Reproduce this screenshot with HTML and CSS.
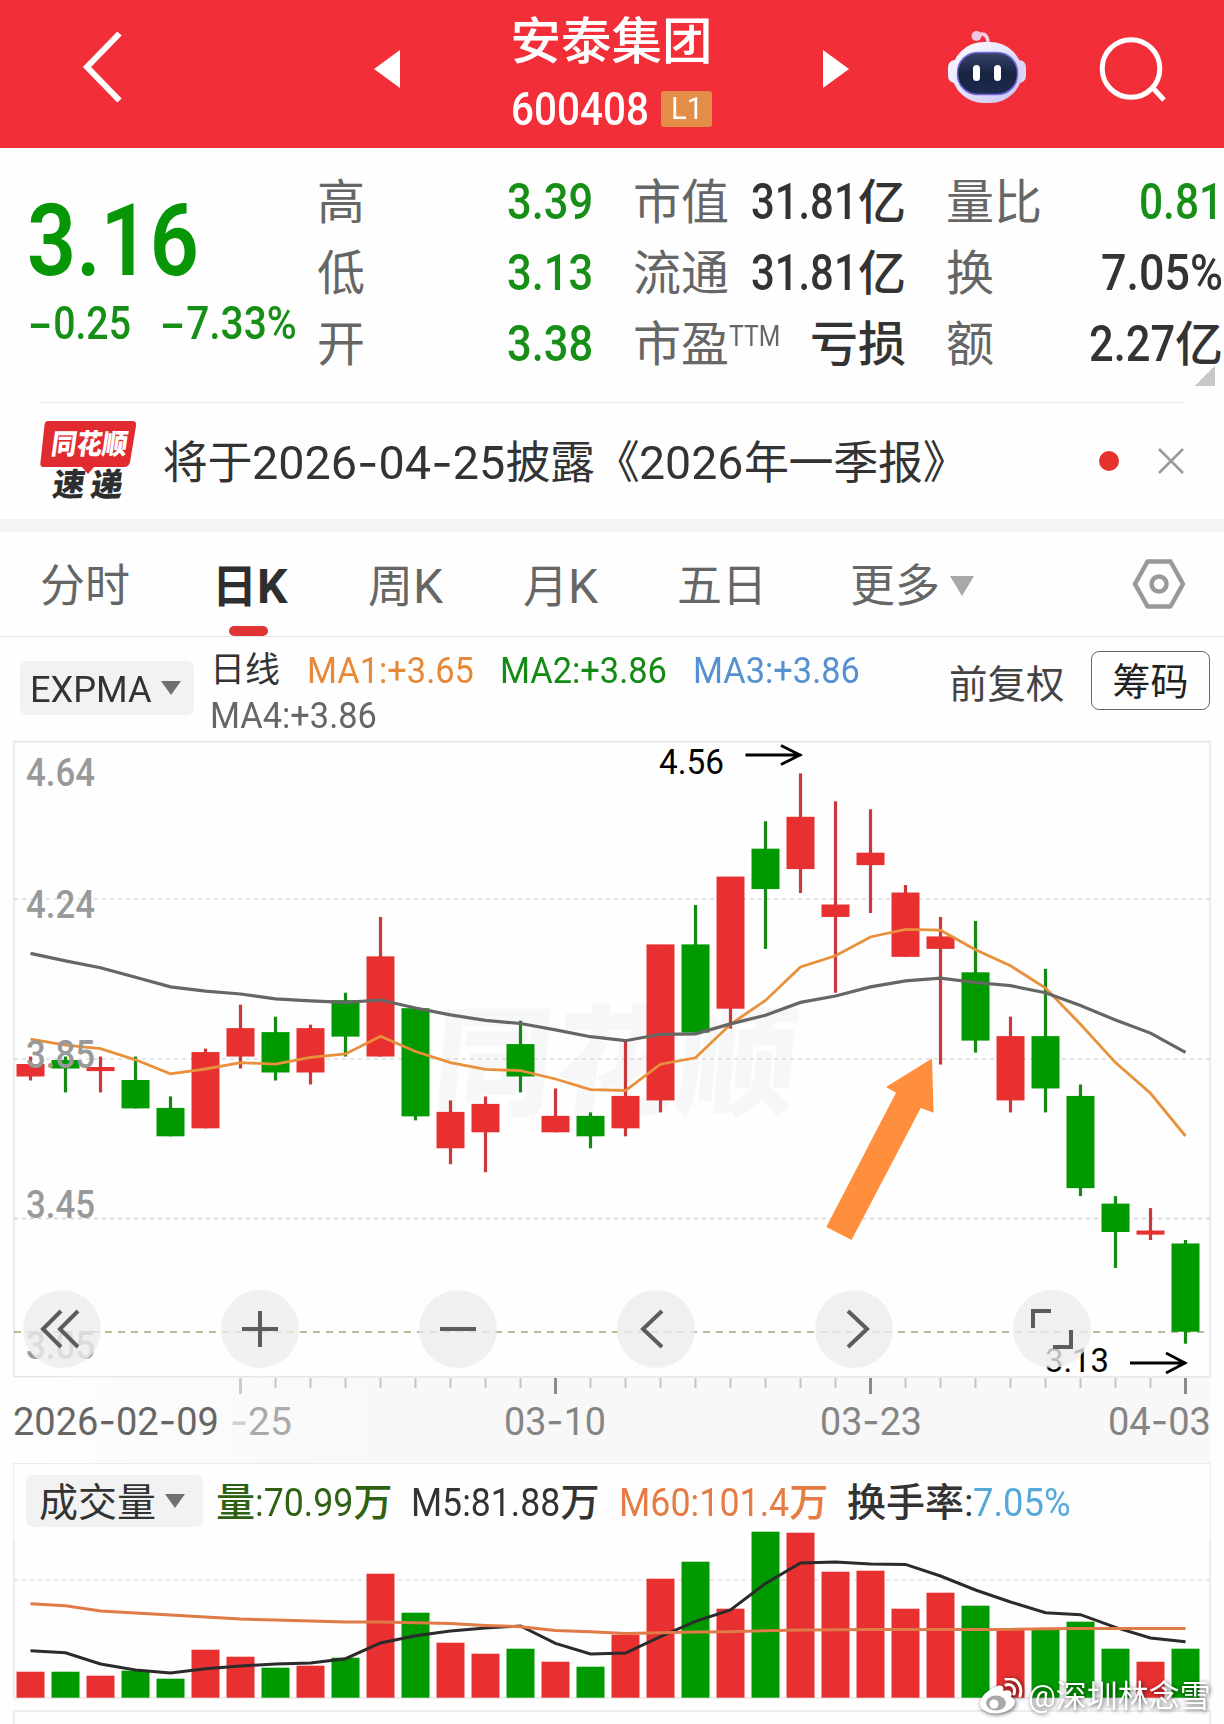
FILE: index.html
```html
<!DOCTYPE html>
<html lang="zh-CN">
<head>
<meta charset="utf-8">
<title>安泰集团 600408</title>
<link rel="stylesheet" href="styles.css">
</head>
<body>
<header class="topbar">
  <svg class="back" width="50" height="80" viewBox="0 0 50 80"><path d="M38.500 6.500L6 40L38.500 73.500" fill="none" stroke="#fff" stroke-width="6"/></svg>
  <svg class="prev" width="26" height="38" viewBox="0 0 26 38"><path d="M26 0V38L0 19z" fill="#fff"/></svg>
  <div class="heading">
    <h1>安泰集团</h1>
    <div class="code"><span class="fit num" data-w="138">600408</span><span class="level"><span class="fit" data-w="32">L1</span></span></div>
  </div>
  <svg class="next" width="26" height="38" viewBox="0 0 26 38"><path d="M0 0V38L26 19z" fill="#fff"/></svg>
  <svg class="robot" width="80" height="76" viewBox="0 0 80 76">
    <defs>
      <linearGradient id="shell" x1="0" y1="0" x2="1" y2="1"><stop offset="0" stop-color="#fff"/><stop offset=".5" stop-color="#e4e2fb"/><stop offset="1" stop-color="#c9bdf2"/></linearGradient>
      <linearGradient id="visor" x1="0" y1="0" x2="0" y2="1"><stop offset="0" stop-color="#37456a"/><stop offset=".5" stop-color="#18233f"/><stop offset="1" stop-color="#1d2b50"/></linearGradient>
    </defs>
    <path d="M29 8C37 3 41 8 41 15" fill="none" stroke="#f4cfe2" stroke-width="3.500"/>
    <circle cx="29.500" cy="8" r="5" fill="#f3c6df"/>
    <rect x="1" y="32" width="14" height="23" rx="7" fill="#eef0ff"/>
    <rect x="65" y="32" width="14" height="23" rx="7" fill="#dcd5f8"/>
    <rect x="5" y="14" width="70" height="61" rx="32" fill="url(#shell)"/>
    <rect x="10.500" y="24.500" width="60" height="42" rx="20" fill="url(#visor)" stroke="#7468e0" stroke-width="1.500"/>
    <rect x="26" y="37" width="7" height="16" rx="3.500" fill="#fff"/>
    <rect x="47" y="37" width="7" height="16" rx="3.500" fill="#fff"/>
  </svg>
  <svg class="search" width="68" height="68" viewBox="0 0 68 68"><g fill="none" stroke="#fff" stroke-width="5"><circle cx="32" cy="32.500" r="28.800"/><path d="M53 51L65 64"/></g></svg>
</header>

<section class="quote">
  <div class="price">
    <div class="last"><span class="fit num" data-w="172">3.16</span></div>
    <div class="change"><span class="fit" data-w="104"><i class="dash">−</i>0.25</span><span class="fit" data-w="138"><i class="dash">−</i>7.33%</span></div>
  </div>
  <dl class="stats">
    <div class="down"><dt>高</dt><dd><span class="fit" data-w="86">3.39</span></dd></div>
    <div><dt>市值</dt><dd><span class="fit" data-w="107">31.81</span>亿</dd></div>
    <div class="down"><dt>量比</dt><dd><span class="fit" data-w="84">0.81</span></dd></div>
    <div class="down"><dt>低</dt><dd><span class="fit" data-w="86">3.13</span></dd></div>
    <div><dt>流通</dt><dd><span class="fit" data-w="107">31.81</span>亿</dd></div>
    <div><dt>换</dt><dd><span class="fit" data-w="122">7.05%</span></dd></div>
    <div class="down"><dt>开</dt><dd><span class="fit" data-w="86">3.38</span></dd></div>
    <div><dt>市盈<sup class="fit" data-w="51">TTM</sup></dt><dd>亏损</dd></div>
    <div><dt>额</dt><dd><span class="fit" data-w="86">2.27</span>亿</dd></div>
  </dl>
  <i class="corner"></i>
</section>

<section class="news">
  <div class="brand">
    <svg width="98" height="80" viewBox="0 0 98 80">
      <path d="M8 0H92Q97 0 96 5L90 41Q89 46 84 46H54L48 53L42 46H4Q-.5 46 .5 41L4.500 4Q5 0 8 0z" fill="#e12b31"/>
      <g transform="skewX(-8)" font-family="Noto Sans CJK SC" font-weight="900">
        <text x="15" y="33" font-size="28" fill="#fff" textLength="76" lengthAdjust="spacingAndGlyphs">同花顺</text>
        <text x="22" y="75" font-size="32" fill="#2e2e2e" textLength="70" lengthAdjust="spacing">速递</text>
      </g>
    </svg>
  </div>
  <p>将于<span class="fit" data-w="253">2026<i class="dash">-</i>04<i class="dash">-</i>25</span>披露<span class="open">《</span><span class="fit" data-w="104">2026</span>年一季报》</p>
  <i class="dot"></i>
  <svg class="close" width="26" height="26" viewBox="0 0 26 26"><path d="M1 1L25 25M25 1L1 25" stroke="#999" stroke-width="2.500"/></svg>
</section>

<nav class="tabs">
  <a>分时</a><a class="on">日<b>K</b></a><a>周<b>K</b></a><a>月<b>K</b></a><a>五日</a><a class="more">更多<i></i></a>
  <svg width="54" height="52" viewBox="0 0 54 52"><g fill="none" stroke="#999" stroke-width="4.500" stroke-linejoin="round"><path d="M15.500 3.500H38.500L51 26L38.500 48.500H15.500L3 26z"/><circle cx="27" cy="26" r="7.500"/></g></svg>
</nav>

<section class="legend">
  <button class="pick"><span class="fit" data-w="122">EXPMA</span><i></i></button>
  <div class="mas">
    <span class="kind">日线</span><span class="fit ma1" data-w="167">MA1:+3.65</span><span class="fit ma2" data-w="167">MA2:+3.86</span><span class="fit ma3" data-w="167">MA3:+3.86</span><span class="fit ma4" data-w="167">MA4:+3.86</span>
  </div>
  <span class="adjust">前复权</span>
  <span class="chips">筹码</span>
</section>

<section class="chart">
  <svg id="price" width="1224" height="733" viewBox="0 730 1224 733"></svg>
  <div class="tools">
    <i><svg viewBox="-39 -39 78 78"><path d="M-1 -18L-19 0L-1 18M16 -18L-2 0L16 18"/></svg></i>
    <i><svg viewBox="-39 -39 78 78"><path d="M-18 0H18M0 -18V18" stroke-width="4"/></svg></i>
    <i><svg viewBox="-39 -39 78 78"><path d="M-18 0H18" stroke-width="4"/></svg></i>
    <i><svg viewBox="-39 -39 78 78"><path d="M6 -18L-13 0L6 18"/></svg></i>
    <i><svg viewBox="-39 -39 78 78"><path d="M-6 -18L13 0L-6 18"/></svg></i>
    <i><svg viewBox="-39 -39 78 78"><path d="M-19 -1V-18H-1M19 1V18H1" stroke-width="4"/></svg></i>
  </div>
</section>

<section class="volume">
  <div class="vlegend">
    <button class="pick vol">成交量<i></i></button>
    <span class="v1">量<span class="fit" data-w="98">:70.99</span>万</span>
    <span class="v2"><span class="fit" data-w="149">M5:81.88</span>万</span>
    <span class="v3"><span class="fit" data-w="170">M60:101.4</span>万</span>
    <span class="v4">换手率:<span class="fit pct" data-w="98">7.05%</span></span>
  </div>
  <svg id="vol" width="1224" height="184" viewBox="0 1540 1224 184"></svg>
  <div class="credit">
    <svg width="44" height="38" viewBox="0 0 44 38"><path d="M17 9C21 6 26 8 24 13C31 11 34 14 32 19C38 22 37 28 30 32C20 38 3 36 1 27C0 20 9 11 17 9z" fill="#fff"/><ellipse cx="17" cy="25" rx="10" ry="7.500" fill="#a9a9a9"/><circle cx="15" cy="26" r="4.500" fill="#fff"/><path d="M27 7C33 5 37 10 35 16M27 1C38 -1 44 8 41 18" fill="none" stroke="#fff" stroke-width="3" stroke-linecap="round"/></svg>
    <span>@深圳林念雪</span>
  </div>
</section>
<script src="chart.js"></script>
</body>
</html>
```
FILE: styles.css
```css
* { box-sizing: border-box; margin: 0; padding: 0; }
html, body { width: 1224px; height: 1724px; overflow: hidden; }
body { background: #fefefe; color: #333; font-family: Roboto, "Noto Sans CJK SC", sans-serif; }
i, sup { font-style: normal; }
svg { display: block; flex: none; }
button { border: 0; font: inherit; color: inherit; }

.fit { display: inline-block; white-space: nowrap; }
.fit > .in { display: inline-block; transform-origin: 0 50%; }
.dash { font-family: Inter, sans-serif; }

.topbar { height: 148px; background: #f22f38; display: flex; align-items: flex-start; color: #fff; }
.back { margin: 27px 244px 0 81px; }
.prev, .next { margin-top: 50px; }
.prev { margin-left: -1px; }
.heading { width: 423px; text-align: center; }
.heading h1 { font-size: 50.500px; line-height: 60px; font-weight: 500; margin-top: 12px; }
.code { display: flex; justify-content: center; align-items: center; font-size: 46px; font-weight: 500; line-height: 50px; margin-top: 12px; }
.level { margin-left: 13px; background: #e38e48; border-radius: 3px; width: 51px; height: 36px; font-size: 31px; line-height: 36px; font-weight: 400; }
.robot { margin: 28px 0 0 98px; }
.search { margin: 36px 0 0 72px; }

.quote { height: 254px; position: relative; display: flex; }
.price { width: 317px; padding-left: 27px; color: #069606; }
.last { font-size: 100px; font-weight: 600; line-height: 100px; margin-top: 43px; }
.change { font-size: 46px; font-weight: 500; line-height: 50px; display: flex; gap: 28px; margin-top: 6px; color: #178f17; }
.stats { width: 907px; display: grid; grid-template-columns: 276px 273px 277px; grid-auto-rows: 71px; column-gap: 40px; padding-top: 19px; font-size: 48px; line-height: 71px; }
.stats div { display: flex; justify-content: space-between; white-space: nowrap; }
.stats dt { color: #666; }
.stats dd { font-weight: 500; font-size: 48px; }
.stats dd .fit { font-size: 50px; }
.stats sup { font-size: 30px; line-height: 30px; vertical-align: 15px; }
.stats .down dd { color: #178f17; }
.corner { position: absolute; left: 1195px; top: 218px; width: 20px; height: 20px; background: linear-gradient(to bottom right, transparent 50%, #c8c8c8 50%); }

.news { height: 117px; margin: 0 40px; border-top: 1.500px solid #ececec; display: flex; align-items: center; }
.brand { width: 123px; }
.news p { font-size: 45px; line-height: 60px; letter-spacing: -.3px; width: 898px; white-space: nowrap; padding-top: 3px; }
.news p .fit { font-size: 46px; letter-spacing: 0; }
.news .dot { width: 20px; height: 20px; border-radius: 50%; background: #e5322f; margin-left: 40px; }
.news .close { margin-left: 39px; }

.tabs { height: 118px; border-top: 13px solid #f4f4f4; border-bottom: 1.500px solid #e4e4e4; display: grid; grid-template-columns: 172px 156px 155px 154px 173px 282px 60px; padding-left: 40px; align-items: center; font-size: 45px; line-height: 60px; color: #666; }
.tabs a { position: relative; white-space: nowrap; top: 3px; }
.tabs a b { font-weight: inherit; font-size: 48px; font-family: Roboto; }
.tabs .on { color: #2e2e2e; font-weight: 700; }
.tabs .on::after { content: ""; position: absolute; left: 17px; top: 69px; width: 39px; height: 10px; border-radius: 5px; background: #e03333; }
.more { display: flex; align-items: center; }
.more i { border: solid transparent; border-width: 20px 12px 0; border-top-color: #a8a8a8; margin: -3px 0 0 10px; }

.legend { height: 93px; display: flex; align-items: flex-start; padding-left: 20px; font-size: 36px; }
.pick { width: 174px; height: 54px; margin-top: 24px; background: #f2f2f2; border-radius: 7px; display: flex; align-items: center; padding: 3px 0 0 10px; font-size: 36.500px; }
.pick i { border: solid transparent; border-width: 14px 10px 0; border-top-color: #707070; margin: -3px 0 0 9px; }
.mas { width: 757px; display: grid; grid-template-columns: 97px 193px 193px 193px; row-gap: 1px; margin: 12px 0 0 16px; line-height: 44px; align-content: start; white-space: nowrap; }
.kind { font-size: 35px; }
.ma1, .ma2, .ma3, .ma4 { font-weight: 450; }
.ma1 { color: #e8893a; } .ma2 { color: #138a13; } .ma3 { color: #5590d0; }
.ma4 { color: #666; grid-column: 1 / 3; }
.adjust { font-size: 38.500px; line-height: 50px; margin: 23px 0 0 -18px; width: 142px; color: #444; white-space: nowrap; }
.chips { width: 119px; height: 59px; margin-top: 14px; border: 1.500px solid #666; border-radius: 8px; font-size: 38px; line-height: 60px; text-align: center; color: #222; }

.chart { position: relative; height: 733px; }
.tools { position: absolute; left: 23px; top: 560px; width: 1068px; display: flex; justify-content: space-between; }
.tools i { width: 78px; height: 78px; border-radius: 50%; background: rgba(236, 236, 236, .8); }
.tools path { fill: none; stroke: #5c5c5c; stroke-width: 4; }

.volume { position: relative; }
.vlegend { height: 77px; margin: 0 13px; border: solid #ebebeb; border-width: 1.500px 1.500px 0; display: grid; grid-template-columns: 190px 195px 208px 228px 1fr; padding-left: 12px; line-height: 78px; font-size: 39px; white-space: nowrap; font-weight: 450; }
.vol { width: 177px; height: 52px; margin-top: 11px; padding-left: 13px; font-size: 39px; font-weight: 400; }
.v1 { color: #2f6113; } .v3 { color: #e57b45; } .pct { color: #54a9d9; }
#vol { overflow: visible; position: relative; }
.credit { position: absolute; left: 979px; top: 212px; display: flex; align-items: center; color: #fff; font-size: 31px; line-height: 44px; white-space: nowrap; filter: drop-shadow(1px 1px 2px rgba(0, 0, 0, .65)); }
.credit span { margin-left: 5px; }
```
FILE: chart.js
```js
// Squeeze or stretch numeric runs to their column width.
document.querySelectorAll('.fit').forEach(el => {
  const w = +el.dataset.w;
  const inner = document.createElement('span');
  inner.className = 'in';
  while (el.firstChild) inner.appendChild(el.firstChild);
  el.appendChild(inner);
  const natural = inner.offsetWidth;
  inner.style.transform = `scaleX(${w / natural})`;
  inner.style.marginRight = (w - natural) + 'px';
});

const R = '#e83030', G = '#009900';
const X = i => 30.5 + i * 35;
const Y = p => 773.9 + (4.56 - p) * 398.8;
// colour, high, body top, body bottom, low
const days = [
  [R,3.85,3.83,3.80,3.79],[G,3.85,3.84,3.82,3.76],[R,3.85,3.82,3.82,3.76],[G,3.85,3.79,3.72,3.72],
  [G,3.75,3.72,3.65,3.65],[R,3.87,3.86,3.67,3.67],[R,3.98,3.92,3.85,3.82],[G,3.95,3.91,3.81,3.79],
  [R,3.93,3.92,3.81,3.78],[G,4.01,3.99,3.90,3.85],[R,4.20,4.10,3.85,3.85],[G,3.97,3.97,3.70,3.69],
  [R,3.74,3.71,3.62,3.58],[R,3.75,3.73,3.66,3.56],[G,3.94,3.88,3.80,3.76],[R,3.77,3.70,3.66,3.66],
  [G,3.71,3.70,3.65,3.62],[R,3.89,3.75,3.67,3.65],[R,4.13,4.13,3.74,3.71],[G,4.23,4.13,3.91,3.91],
  [R,4.30,4.30,3.97,3.92],[G,4.44,4.37,4.27,4.12],[R,4.56,4.45,4.32,4.26],[R,4.49,4.23,4.20,4.01],
  [R,4.47,4.36,4.33,4.21],[R,4.28,4.26,4.10,4.10],[R,4.20,4.15,4.12,3.83],[G,4.19,4.06,3.89,3.86],
  [R,3.95,3.90,3.74,3.71],[G,4.07,3.90,3.77,3.71],[G,3.78,3.75,3.52,3.50],[G,3.50,3.48,3.41,3.32],
  [R,3.47,3.41,3.41,3.39],[G,3.39,3.38,3.16,3.13]
];
const fast = [3.895,3.88,3.871,3.843,3.808,3.82,3.836,3.832,3.849,3.858,3.902,3.864,3.836,3.819,3.816,3.795,3.768,3.766,3.832,3.848,3.932,3.992,4.076,4.104,4.151,4.17,4.168,4.119,4.079,4.023,3.932,3.836,3.759,3.652];
const slow = [4.11,4.091,4.074,4.05,4.026,4.015,4.008,3.996,3.991,3.987,3.993,3.973,3.956,3.942,3.934,3.918,3.901,3.891,3.907,3.908,3.933,3.955,3.987,4.003,4.026,4.041,4.048,4.037,4.029,4.011,3.979,3.943,3.91,3.862];
const line = (pts, f, c, w) => `<polyline points="${pts.map((p, i) => X(i) + ',' + f(p).toFixed(1)).join(' ')}" fill="none" stroke="${c}" stroke-width="${w}"/>`;
const text = (x, y, s, w, size, fill, extra = '') => `<text x="${x}" y="${y}" font-size="${size}" fill="${fill}" textLength="${w}" lengthAdjust="spacingAndGlyphs" ${extra}>${s}</text>`;
const hline = (y, c, d, w = 1.3) => `<path d="M14 ${y}H1210" stroke="${c}" stroke-width="${w}" stroke-dasharray="${d}"/>`;
const dash = '<tspan font-family="Inter" font-weight="400">-</tspan>';

let s = `<defs><linearGradient id="band"><stop offset="0" stop-color="#fefefe"/><stop offset=".3" stop-color="#f8f8f8"/><stop offset="1" stop-color="#f8f8f8"/></linearGradient></defs>
<rect x="14" y="1377" width="1196" height="86" fill="url(#band)"/>
<rect x="14" y="741.7" width="1196" height="635" fill="none" stroke="#e6e6e6" stroke-width="1.6"/>
<g transform="translate(430 1106) skewX(-5)"><text font-family="Noto Sans CJK SC" font-weight="900" font-size="120" fill="#f7f7f7" textLength="364">同花顺</text></g>`;
s += hline(899, '#dcdcdc', '4 4') + hline(1059, '#dcdcdc', '4 4') + hline(1218.5, '#d2d2d2', '4 4') + hline(1332, '#a5a578', '7 6', 1.7);
days.forEach(([c, h, a, b, l], i) => {
  const top = Y(a) - 1, ht = Math.max(Y(b) - Y(a), 3.6);
  s += `<rect x="${X(i) - 1.6}" y="${Y(h) - .5}" width="3.2" height="${Y(l) - Y(h)}" fill="${c === R ? '#c9383b' : '#138a13'}"/>`;
  s += `<rect x="${X(i) - 14}" y="${a === b ? top - 1 : top}" width="28" height="${ht + .5}" fill="${c}"/>`;
});
s += line(fast, Y, '#e8903a', 2.8) + line(slow, Y, '#666', 3.2);
[['4.64', 786], ['4.24', 918], ['3.85', 1068], ['3.45', 1218], ['3.05', 1359]].forEach(([t, y]) => { s += text(26, y, t, 69, 38, '#999', 'font-weight="500"'); });
s += text(659, 774, '4.56', 65, 34.5, '#000') + text(1045, 1372, '3.13', 64, 34, '#000');
s += '<g fill="none" stroke="#000" stroke-width="2.8"><path d="M745.500 755H801M781 745.500L800 755L781 764.500M1130 1363H1186M1166 1353L1185 1363L1166 1373"/></g>';
s += '<path d="M932 1058.500L933.600 1112.700L920.700 1108L851.600 1240L826.300 1227L896 1092.700L886 1087z" fill="#ff8f3c"/>';
for (let i = 6; i < 34; i++) {
  const major = i % 9 === 6;
  s += `<rect x="${X(i) - (major ? 1.5 : 1)}" y="1378" width="${major ? 3 : 2}" height="${major ? 16 : 10}" fill="${major ? (i === 6 ? '#ccc' : '#8c8c8c') : '#c4c4c4'}"/>`;
}
const D = 'font-weight="450"';
s += text(13, 1435, `2026${dash}02${dash}09`, 206, 39, '#666', D);
s += text(230, 1435, '<tspan fill="#d0d0d0" font-family="Inter">-</tspan>25', 62, 39, '#aaa', D);
s += text(504, 1435, `03${dash}10`, 102, 39, '#858585', D) + text(820, 1435, `03${dash}23`, 102, 39, '#858585', D) + text(1108, 1435, `04${dash}03`, 103, 39, '#858585', D);
document.getElementById('price').innerHTML = s;

const base = 1697.7, V = h => base - h;
const vols = [26,26,22,27,19,48,41,30,32,40,124,85,55,44,49,36,31,63,119,136,89,166,165,126,127,89,105,92,68,68,76,49,36,49];
const m5 = [47,45,33.7,27.7,24.7,29,31.7,33.7,34.7,39,54.7,62,66.7,69.7,71.7,54.3,43.7,44.7,61,76.3,87.7,114.3,134.7,135.7,133.7,133.3,121.7,107.7,95.7,85,83,70.3,59.7,56];
const m60 = [94,92,86.7,84.7,82.7,80.7,78.7,77.7,76.7,75.7,75.7,75,74.3,72.3,71,67.3,66,64.3,65,65.7,66,67,67.7,68,68.3,68.3,68.3,68.3,68.3,69,69.3,69.3,69.3,69.3];
let v = '<path d="M14 1540V1698H1210V1540M14 1724V1711H1210V1724" fill="none" stroke="#e8e8e8" stroke-width="1.6"/>' + hline(1580, '#e4e4e4', '4 4');
vols.forEach((h, i) => { v += `<rect x="${X(i) - 14}" y="${V(h)}" width="28" height="${h}" fill="${days[i][0]}"/>`; });
v += line(m5, V, '#2b2b2b', 3) + line(m60, V, '#e07a48', 3);
document.getElementById('vol').innerHTML = v;
```
